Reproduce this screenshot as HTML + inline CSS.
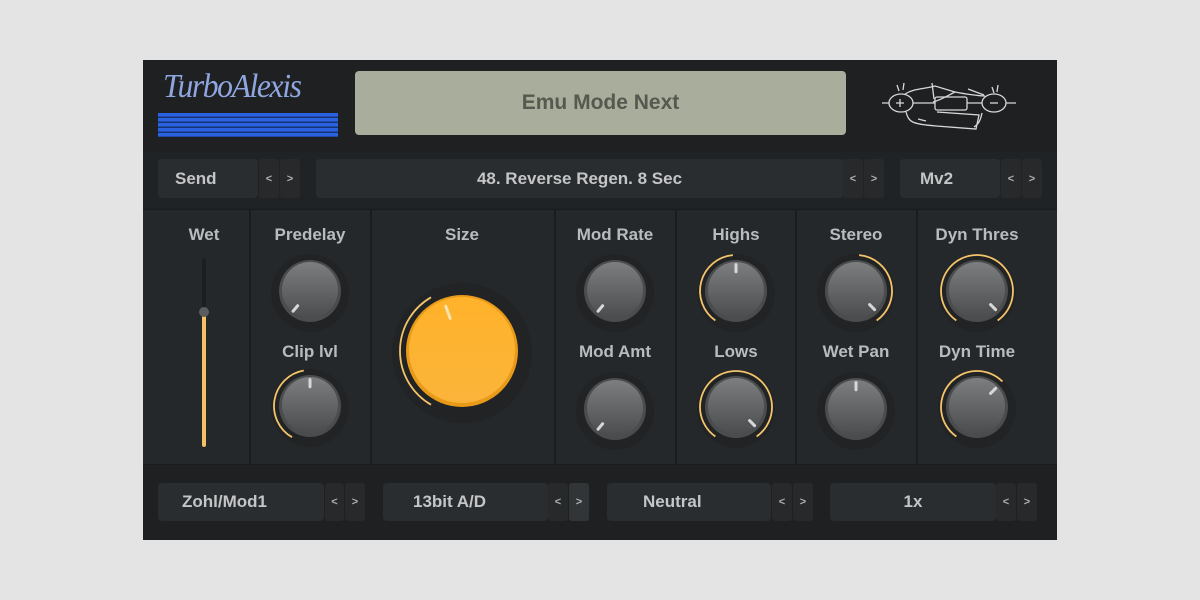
<!DOCTYPE html>
<html><head><meta charset="utf-8"><style>
*{margin:0;padding:0;box-sizing:border-box}
body{width:1200px;height:600px;background:#e4e4e4;position:relative;overflow:hidden;font-family:"Liberation Sans",sans-serif}
.p{position:absolute}
.box{position:absolute;background:#2a2d2f;border-radius:4px;color:#c3c5c7;font-weight:bold;font-size:17px;display:flex;align-items:center}
.ar{position:absolute;background:#27292b;color:#aeb0b2;font-size:11px;font-weight:bold;display:flex;align-items:center;justify-content:center;border-radius:3px}
.lbl{position:absolute;color:#b9bcbe;font-weight:bold;font-size:17px;text-align:center;width:120px}
</style></head><body>
<div class="p" style="left:143px;top:60px;width:914px;height:480px;background:#1e2022"></div>
<div class="p" style="left:143px;top:60px;width:914px;height:92px;background:#1e2022"></div>
<div class="p" style="left:163px;top:68px;color:#8fa6e0;font-family:'Liberation Serif',serif;font-style:italic;font-size:34px;letter-spacing:-1.5px;transform:scaleX(0.93);transform-origin:left">TurboAlexis</div>
<div class="p" style="left:158px;top:113px;width:180px;height:24px;background:repeating-linear-gradient(#2b62e0 0 3.5px,#173274 3.5px 5px)"></div>
<div class="p" style="left:355px;top:71px;width:491px;height:64px;background:#a9ad9c;border-radius:4px;color:#55594f;font-weight:bold;font-size:21px;display:flex;align-items:center;justify-content:center">Emu Mode Next</div>
<svg class="p" style="left:880px;top:75px" width="140" height="60" viewBox="0 0 140 60" fill="none" stroke="#d8d8d8" stroke-width="1.3">
<ellipse cx="21" cy="28" rx="12" ry="9"/><path d="M16 28h8M20 24v8"/>
<ellipse cx="114" cy="28" rx="12" ry="9"/><path d="M110 28h8"/>
<rect x="55" y="22" width="32" height="13" rx="2"/>
<path d="M33 28h22M87 28h15M2 28h7M126 28h10"/>
<path d="M25 19c10-6 20-5 30-8l20 6c-8 4-14 8-22 10M75 17c10 2 25 4 30 4"/>
<path d="M26 37c3 10 5 12 30 14l40 3 3-14-42-3M102 38c-2 10-5 12-8 14"/>
<path d="M52 8l2 16M17 10l2 6M24 8l-1 7M112 12l2 6M118 10l-1 7M38 44l8 2M88 14l16 6"/>
</svg>
<div class="p" style="left:143px;top:152px;width:914px;height:56px;background:#202325"></div>
<div class="box" style="left:158px;top:159px;width:100px;height:39px;padding-left:17px">Send</div>
<div class="ar" style="left:259px;top:159px;width:20px;height:39px">&lt;</div>
<div class="ar" style="left:280px;top:159px;width:20px;height:39px">&gt;</div>
<div class="box" style="left:316px;top:159px;width:527px;height:39px;justify-content:center">48. Reverse Regen. 8 Sec</div>
<div class="ar" style="left:843px;top:159px;width:20px;height:39px">&lt;</div>
<div class="ar" style="left:864px;top:159px;width:20px;height:39px">&gt;</div>
<div class="box" style="left:900px;top:159px;width:100px;height:39px;padding-left:20px">Mv2</div>
<div class="ar" style="left:1001px;top:159px;width:20px;height:39px">&lt;</div>
<div class="ar" style="left:1022px;top:159px;width:20px;height:39px">&gt;</div>
<div class="p" style="left:143px;top:209px;width:914px;height:256px;background:#1a1c1e"></div>
<div class="p" style="left:143px;top:210px;width:106px;height:254px;background:#25282a"></div>
<div class="p" style="left:251px;top:210px;width:119px;height:254px;background:#25282a"></div>
<div class="p" style="left:372px;top:210px;width:182px;height:254px;background:#25282a"></div>
<div class="p" style="left:556px;top:210px;width:119px;height:254px;background:#25282a"></div>
<div class="p" style="left:677px;top:210px;width:118px;height:254px;background:#25282a"></div>
<div class="p" style="left:797px;top:210px;width:119px;height:254px;background:#25282a"></div>
<div class="p" style="left:918px;top:210px;width:139px;height:254px;background:#25282a"></div>
<div class="lbl" style="left:144px;top:225px">Wet</div>
<div class="lbl" style="left:250px;top:225px">Predelay</div>
<div class="lbl" style="left:250px;top:342px">Clip lvl</div>
<div class="lbl" style="left:402px;top:225px">Size</div>
<div class="lbl" style="left:555px;top:225px">Mod Rate</div>
<div class="lbl" style="left:555px;top:342px">Mod Amt</div>
<div class="lbl" style="left:676px;top:225px">Highs</div>
<div class="lbl" style="left:676px;top:342px">Lows</div>
<div class="lbl" style="left:796px;top:225px">Stereo</div>
<div class="lbl" style="left:796px;top:342px">Wet Pan</div>
<div class="lbl" style="left:917px;top:225px">Dyn Thres</div>
<div class="lbl" style="left:917px;top:342px">Dyn Time</div>
<svg class="p" style="left:0;top:0" width="1200" height="600">
<defs>
<linearGradient id="g" x1="0" y1="0" x2="0" y2="1"><stop offset="0" stop-color="#7c7e80"/><stop offset="1" stop-color="#4a4c4e"/></linearGradient>
<linearGradient id="o" x1="0" y1="0" x2="0" y2="1"><stop offset="0" stop-color="#ffb22a"/><stop offset="1" stop-color="#fbb43a"/></linearGradient>
</defs>
<rect x="202" y="258" width="4" height="190" rx="2" fill="#1c1e20"/>
<rect x="202" y="312" width="4" height="135" rx="2" fill="#f5c167"/>
<circle cx="204" cy="312" r="5" fill="#5a5c5e"/>
<g id="knobs"></g>
</svg>
<div class="box" style="left:158px;top:483px;width:166px;height:38px;padding-left:24px">Zohl/Mod1</div>
<div class="ar" style="left:325px;top:483px;width:19px;height:38px">&lt;</div>
<div class="ar" style="left:345px;top:483px;width:20px;height:38px">&gt;</div>
<div class="box" style="left:383px;top:483px;width:165px;height:38px;padding-left:30px">13bit A/D</div>
<div class="ar" style="left:548px;top:483px;width:20px;height:38px">&lt;</div>
<div class="ar" style="left:569px;top:483px;width:20px;height:38px;background:#323537">&gt;</div>
<div class="box" style="left:607px;top:483px;width:164px;height:38px;padding-left:36px">Neutral</div>
<div class="ar" style="left:772px;top:483px;width:20px;height:38px">&lt;</div>
<div class="ar" style="left:793px;top:483px;width:20px;height:38px">&gt;</div>
<div class="box" style="left:830px;top:483px;width:166px;height:38px;justify-content:center">1x</div>
<div class="ar" style="left:996px;top:483px;width:20px;height:38px">&lt;</div>
<div class="ar" style="left:1017px;top:483px;width:20px;height:38px">&gt;</div>
<script>
var K=[[310,291,31,-140,null,null],[310,406,31,0,-150,-10],[462,351,56,-20,-150,-30],[615,291,31,-140,null,null],[615,409,31,-140,null,null],
[736,291,31,0,-145,-5],[736,407,31,135,-145,145],[856,291,31,135,5,145],[856,409,31,0,null,null],[977,291,31,135,-145,145],[977,407,31,45,-145,45]];
var s='';
function pt(cx,cy,r,a){a=a*Math.PI/180;return [cx+r*Math.sin(a),cy-r*Math.cos(a)];}
K.forEach(function(k){var cx=k[0],cy=k[1],r=k[2],big=r>40;
s+='<circle cx="'+cx+'" cy="'+(cy+2)+'" r="'+(r+(big?14:8))+'" fill="#212325"/>';
if(k[4]!==null){var ar=r+(big?6:5);var a=pt(cx,cy,ar,k[4]),b=pt(cx,cy,ar,k[5]);var l=(k[5]-k[4])>180?1:0;
s+='<path d="M'+a[0]+' '+a[1]+'A'+ar+' '+ar+' 0 '+l+' 1 '+b[0]+' '+b[1]+'" fill="none" stroke="#f4c46a" stroke-width="1.8"/>';}
s+='<circle cx="'+cx+'" cy="'+cy+'" r="'+r+'" fill="'+(big?'#e89a18':'#4a4c4e')+'"/>';
s+='<circle cx="'+cx+'" cy="'+(cy-1)+'" r="'+(r-3)+'" fill="url(#'+(big?'o':'g')+')"/>';
var p1=pt(cx,cy,r*0.62,k[3]),p2=pt(cx,cy,r*0.85,k[3]);
s+='<line x1="'+p1[0]+'" y1="'+p1[1]+'" x2="'+p2[0]+'" y2="'+p2[1]+'" stroke="'+(big?'#fbe3b0':'#d8d8d8')+'" stroke-width="3" stroke-linecap="round"/>';});
document.getElementById('knobs').innerHTML=s;
</script>
</body></html>
